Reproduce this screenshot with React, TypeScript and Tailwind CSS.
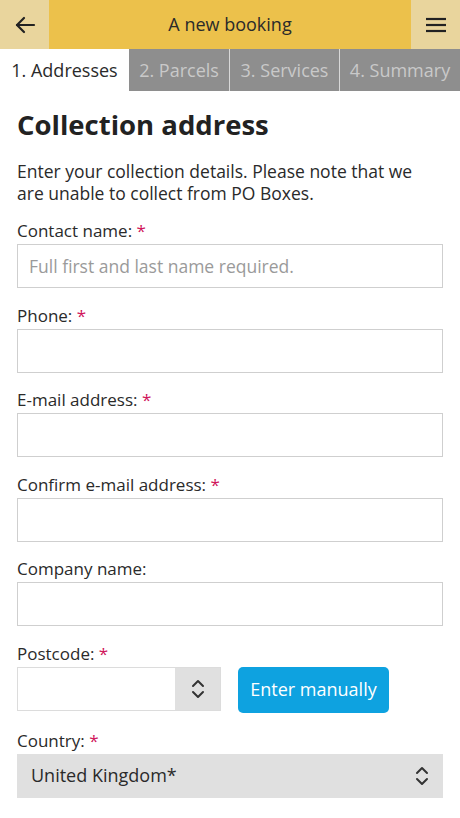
import React from "react";

const Label = ({ text, req = true }: { text: string; req?: boolean }) => (
  <div className="text-[17px] leading-[20px] text-[#2a2a2a] mb-[3px]">
    {text}
    {req && <span className="text-[#d0145a]"> *</span>}
  </div>
);

const Field = ({ label, req = true, placeholder }: { label: string; req?: boolean; placeholder?: string }) => (
  <div className="mb-[17.5px]">
    <Label text={label} req={req} />
    <div className="h-[44px] border border-[#cfcfcf] bg-white flex items-center px-[11px] text-[17.5px] text-[#9a9a9a]">
      {placeholder}
    </div>
  </div>
);

const Chevrons = () => (
  <svg width="14" height="24" viewBox="0 0 14 24" fill="none" stroke="#333" strokeWidth="2" strokeLinecap="round" strokeLinejoin="round">
    <path d="M2 9 L7 4 L12 9" />
    <path d="M2 15 L7 20 L12 15" />
  </svg>
);

export default function App() {
  return (
    <div className="w-[460px] h-[818px] bg-white overflow-hidden" style={{ fontFamily: '"Open Sans", sans-serif' }}>
      <div className="flex h-[49px]">
        <div className="w-[49px] bg-[#e9d59d] flex items-center justify-center">
          <svg width="22" height="20" viewBox="0 0 22 20" fill="none" stroke="#222" strokeWidth="2.2" strokeLinecap="round" strokeLinejoin="round">
            <path d="M20 10 H3" />
            <path d="M10 3 L3 10 L10 17" />
          </svg>
        </div>
        <div className="flex-1 bg-[#ecc14b] flex items-center justify-center text-[18px] text-[#2a2a2a]">A new booking</div>
        <div className="w-[49px] bg-[#e9d59d] flex items-center justify-center">
          <svg width="22" height="16" viewBox="0 0 22 16" fill="none" stroke="#222" strokeWidth="2.2">
            <path d="M1 2 H21" />
            <path d="M1 8 H21" />
            <path d="M1 14 H21" />
          </svg>
        </div>
      </div>
      <div className="flex h-[42px] text-[18px]">
        <div className="w-[129px] bg-white flex items-center justify-center text-[#2a2a2a]">1. Addresses</div>
        <div className="w-[101px] bg-[#8e8e8e] border-r border-[#d8d8d8] flex items-center justify-center text-[#c9c9c9]">2. Parcels</div>
        <div className="w-[110px] bg-[#8e8e8e] border-r border-[#d8d8d8] flex items-center justify-center text-[#c9c9c9]">3. Services</div>
        <div className="flex-1 bg-[#8e8e8e] flex items-center justify-center text-[#c9c9c9]">4. Summary</div>
      </div>
      <div className="px-[17px]">
        <h1 className="text-[27.5px] font-bold text-[#222] mt-[16px] leading-[36px]">Collection address</h1>
        <p className="text-[17.5px] leading-[22px] text-[#2a2a2a] mt-[17px] mb-[17px]">
          Enter your collection details. Please note that we are unable to collect from PO Boxes.
        </p>
        <Field label="Contact name:" placeholder="Full first and last name required." />
        <Field label="Phone:" />
        <Field label="E-mail address:" />
        <Field label="Confirm e-mail address:" />
        <Field label="Company name:" req={false} />
        <div className="mb-[18px]">
          <Label text="Postcode:" />
          <div className="flex items-start">
            <div className="w-[204px] h-[44px] border border-[#dcdcdc] flex">
              <div className="flex-1 bg-white" />
              <div className="w-[45px] bg-[#e0e0e0] flex items-center justify-center">
                <Chevrons />
              </div>
            </div>
            <button className="ml-[17px] h-[46px] w-[151px] rounded-[5px] bg-[#0ea2e0] text-white text-[18px]">Enter manually</button>
          </div>
        </div>
        <div>
          <Label text="Country:" />
          <div className="h-[44px] bg-[#e0e0e0] flex items-center justify-between pl-[14px] pr-[14px] text-[18px] text-[#2a2a2a]">
            <span>United Kingdom*</span>
            <Chevrons />
          </div>
        </div>
      </div>
    </div>
  );
}
